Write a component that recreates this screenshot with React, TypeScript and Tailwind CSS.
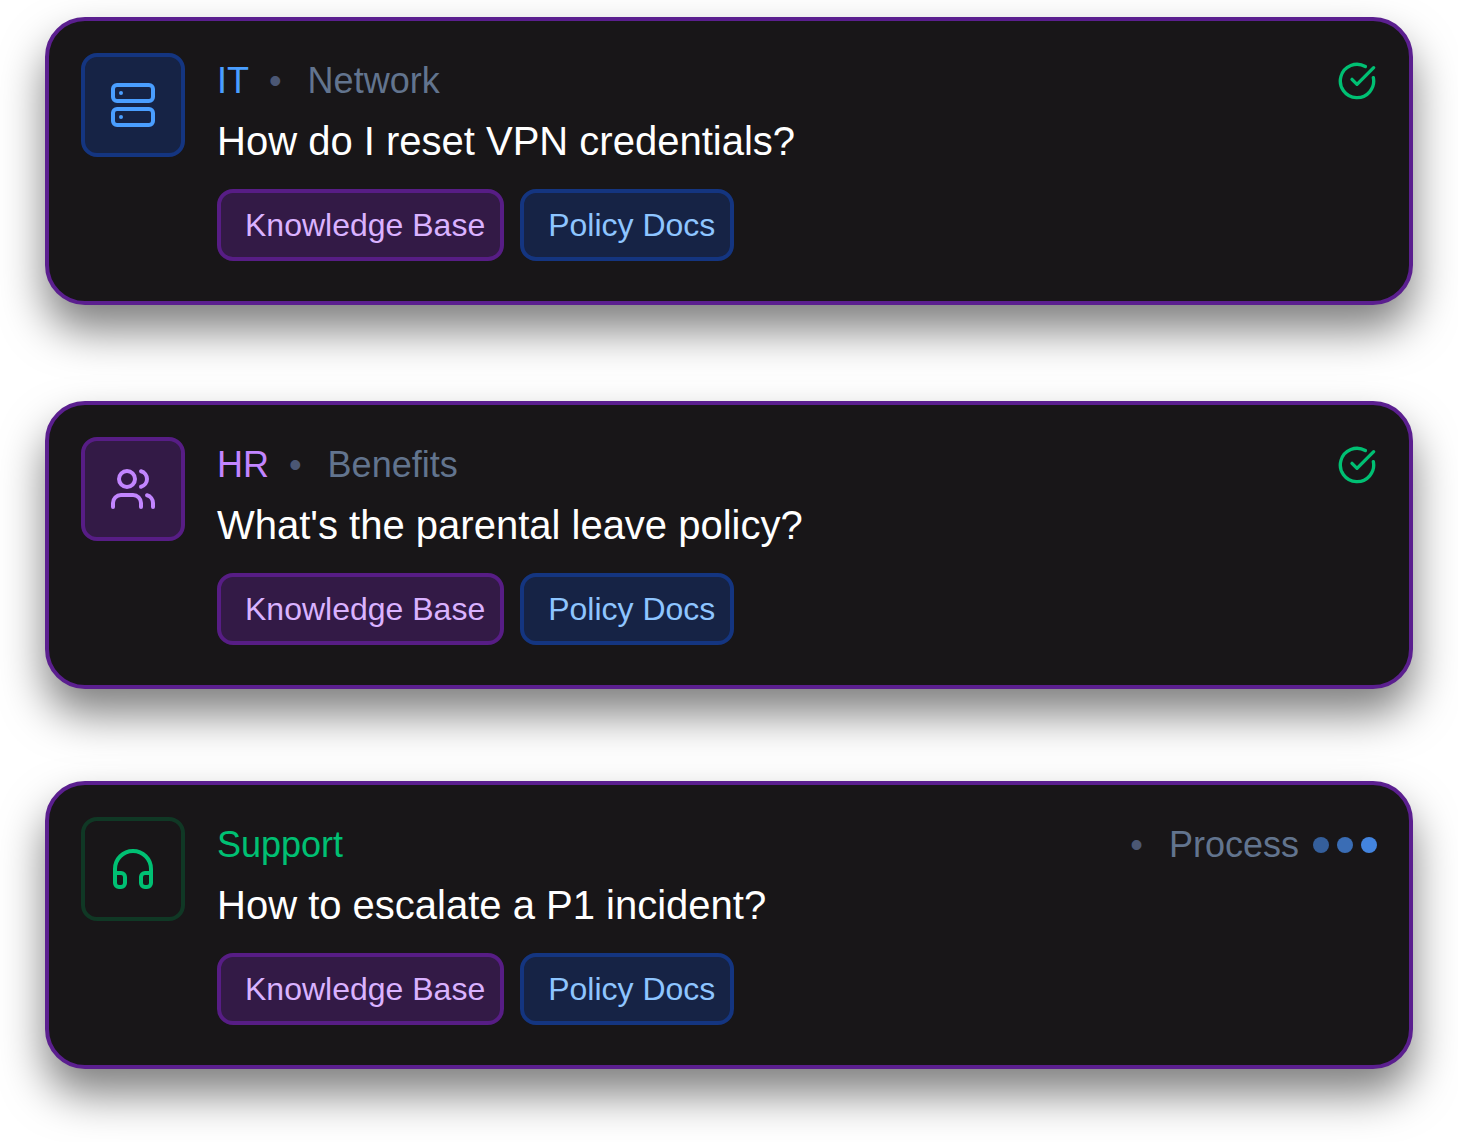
import React from 'react';
import { CircleCheckBig, Headphones, Server, Users } from 'lucide-react';
import type { LucideIcon } from 'lucide-react';

interface Query {
    id: string;
    department: string;
    topic: string;
    question: string;
    icon: LucideIcon;
    textClass: string;
    boxClass: string;
    pending?: boolean;
}

const answered: Query[] = [
    {
        id: 'it',
        department: 'IT',
        topic: 'Network',
        question: 'How do I reset VPN credentials?',
        icon: Server,
        textClass: 'text-[#4a9eff]',
        boxClass: 'bg-[#162345] border-[#143580]',
    },
    {
        id: 'hr',
        department: 'HR',
        topic: 'Benefits',
        question: "What's the parental leave policy?",
        icon: Users,
        textClass: 'text-[#c285ff]',
        boxClass: 'bg-[#331a46] border-[#571d85]',
    },
];

const pending: Query[] = [
    {
        id: 'support',
        department: 'Support',
        topic: 'Process',
        question: 'How to escalate a P1 incident?',
        icon: Headphones,
        textClass: 'text-[#00c073]',
        boxClass: 'border-[#103825]',
        pending: true,
    },
];

const TypingDots: React.FC = () => (
    <div className="flex gap-2" role="status" aria-label="Processing">
        <span className="size-4 rounded-full bg-[#355f9b]" />
        <span className="size-4 rounded-full bg-[#3a6db5]" />
        <span className="size-4 rounded-full bg-[#4384de]" />
    </div>
);

const QueryCard: React.FC<{ query: Query }> = ({ query }) => {
    const Icon = query.icon;

    return (
        <article className="flex items-start gap-8 rounded-[40px] border-4 border-[#5b1f8f] bg-[#181618] px-8 pt-8 pb-10 shadow-[0_25px_44px_rgba(0,0,0,0.5)]">
            <div className={`flex size-26 shrink-0 items-center justify-center rounded-2xl border-4 ${query.boxClass}`}>
                <Icon className={`size-12 ${query.textClass}`} />
            </div>
            <div className="min-w-0 flex-1">
                <div className="flex items-center text-[36px] leading-[55px]">
                    <span className={query.textClass}>{query.department}</span>
                    <div className={`flex ${query.pending ? 'ml-auto mr-3.5' : 'ml-5 mr-auto'}`}>
                        <span className="mr-6.5 text-[#4b5774]">•</span>
                        <span className="text-[#62748e]">{query.topic}</span>
                    </div>
                    {query.pending ? <TypingDots /> : <CircleCheckBig className="size-10 text-[#00c073]" />}
                </div>
                <h2 className="mt-px text-[40px] leading-16 text-white">{query.question}</h2>
                <div className="mt-4 flex gap-4 text-[32px] leading-16">
                    <span className="rounded-2xl border-4 border-[#571d85] bg-[#331a46] pr-[15px] pl-6 text-[#dab2ff]">
                        Knowledge Base
                    </span>
                    <span className="rounded-2xl border-4 border-[#143580] bg-[#162345] pr-[15px] pl-6 text-[#8ec5ff]">
                        Policy Docs
                    </span>
                </div>
            </div>
        </article>
    );
};

const App: React.FC = () => {
    return (
        <main className="min-h-screen bg-white px-[45px] pt-[17px] pb-16 font-['Liberation_Sans',Arial,sans-serif]">
            <section className="flex flex-col gap-24" aria-label="Answered">
                {answered.map(query => (
                    <QueryCard key={query.id} query={query} />
                ))}
            </section>
            <section className="mt-23 flex flex-col gap-24" aria-label="In progress">
                {pending.map(query => (
                    <QueryCard key={query.id} query={query} />
                ))}
            </section>
        </main>
    );
};

export default App;
